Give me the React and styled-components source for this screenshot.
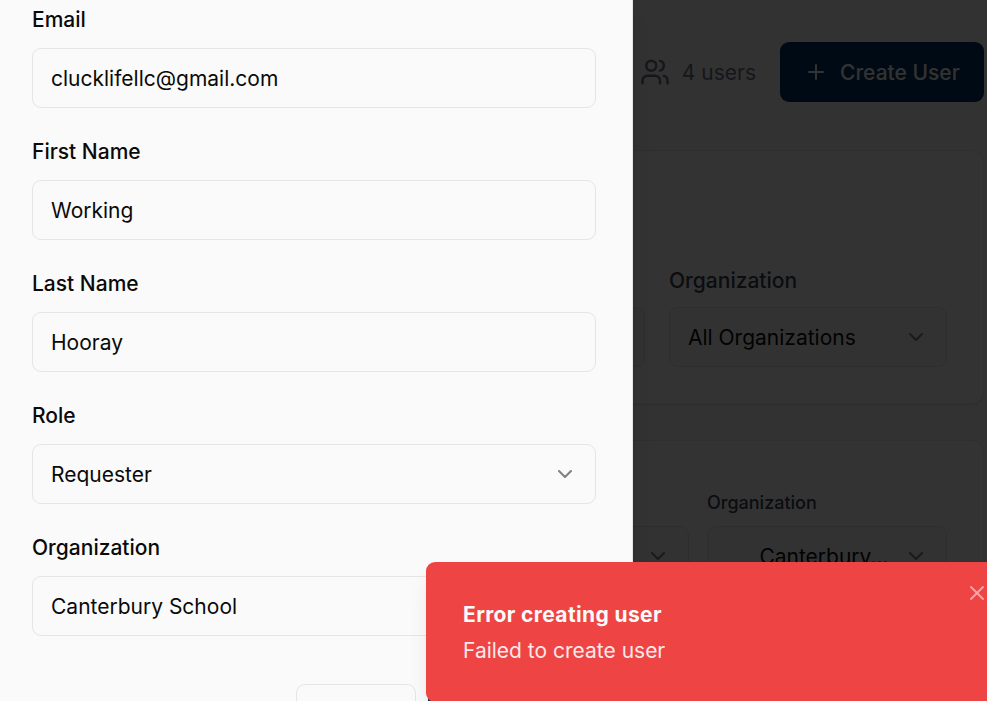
import React from "react";
import styled, { createGlobalStyle } from "styled-components";
import { ChevronDown, Plus, Users, X } from "lucide-react";

const GlobalStyle = createGlobalStyle`
  *, *::before, *::after { box-sizing: border-box; }
  body { margin: 0; overflow: hidden; background: #fafafa; }
  button, input { font: inherit; color: inherit; }
`;

const Screen = styled.div`
  position: relative;
  width: 987px;
  height: 701px;
  overflow: hidden;
  background: #fafafa;
  color: #0a0a0a;
  font-family: Inter, "Liberation Sans", sans-serif;
  font-size: 21px;
  line-height: 30px;
`;

/* Users page */
const Page = styled.main`
  width: 984px;
  padding-top: 42px;
`;

const PageHeader = styled.header`
  display: flex;
  justify-content: flex-end;
  align-items: center;
  gap: 24px;
  height: 60px;
`;

const UserCount = styled.div`
  display: flex;
  align-items: center;
  gap: 12px;
  color: #6b7280;
`;

const Text = styled.span`
  padding-top: 2px;
`;

const PrimaryButton = styled.button`
  display: flex;
  align-items: center;
  gap: 12px;
  width: 204px;
  height: 60px;
  padding: 0 24px;
  border: 0;
  border-radius: 9px;
  background: #003366;
  color: #fafafa;
  font-weight: 500;
  white-space: nowrap;

  svg { flex: none; }
`;

const Card = styled.section`
  display: flex;
  align-items: flex-start;
  justify-content: flex-end;
  gap: ${(p) => p.$gap}px;
  height: ${(p) => p.$height}px;
  margin-top: ${(p) => p.$top}px;
  padding: ${(p) => p.$padTop}px 36px 0;
  border: 1px solid #e9e9e9;
  border-radius: 12px;
  background: #ffffff;
  box-shadow: 0 1px 3px rgba(0, 0, 0, 0.1);
`;

const Filter = styled.div`
  display: flex;
  flex-direction: column;
  justify-content: flex-end;
  width: ${(p) => p.$width}px;
  height: ${(p) => p.$height}px;
`;

const FilterLabel = styled.span`
  margin-bottom: 11px;
  color: #374151;
  font-size: ${(p) => (p.$small ? 18 : 21)}px;
  line-height: ${(p) => (p.$small ? 24 : 30)}px;
  font-weight: 500;
`;

/* Form controls */
const Control = styled.div`
  display: flex;
  align-items: center;
  justify-content: space-between;
  width: 100%;
  height: 60px;
  flex: none;
  padding: 0 18px;
  border: 1px solid #e5e5e5;
  border-radius: 9px;
  background: #fafafa;

  svg { opacity: 0.5; }
`;

const CenteredValue = styled(Text)`
  flex: 1;
  padding-left: 18px;
  text-align: center;
`;

const Input = styled.input`
  display: block;
  width: 100%;
  height: 60px;
  padding: 0 18px;
  border: 1px solid #e5e5e5;
  border-radius: 9px;
  outline: 0;
  background: #fafafa;
`;

/* Layers above the page */
const Overlay = styled.div`
  position: absolute;
  inset: 0;
  background: rgba(0, 0, 0, 0.8);
`;

const Drawer = styled.aside`
  position: absolute;
  top: 0;
  left: 0;
  width: 633px;
  height: 701px;
  padding: 5px 36px 0 32px;
  border-right: 1px solid #e5e5e5;
  background: #fafafa;
  box-shadow: 0 15px 23px -5px rgba(0, 0, 0, 0.1), 0 6px 9px -6px rgba(0, 0, 0, 0.1);
`;

const Form = styled.form`
  display: flex;
  flex-direction: column;
  gap: 29px;
`;

const Field = styled.div`
  display: flex;
  flex-direction: column;
  gap: 13px;
`;

const Label = styled.label`
  font-weight: 500;
`;

const Actions = styled.div`
  display: flex;
  gap: 12px;
  margin: 19px -32px 0 264px;
`;

const ActionButton = styled.button`
  width: ${(p) => p.$width}px;
  height: 60px;
  flex: none;
  border: 1px solid ${(p) => (p.$primary ? "#003366" : "#e5e5e5")};
  border-radius: ${(p) => (p.$primary ? 0 : 9)}px;
  background: ${(p) => (p.$primary ? "#003366" : "#fafafa")};
`;

const Toast = styled.div`
  position: absolute;
  left: 426px;
  top: 562px;
  width: 600px;
  height: 140px;
  padding: 38px 37px 0;
  border-radius: 9px;
  background: #ef4444;
  color: #fafafa;
  box-shadow: 0 15px 23px -5px rgba(0, 0, 0, 0.1), 0 6px 9px -6px rgba(0, 0, 0, 0.1);
`;

const ToastTitle = styled.div`
  font-weight: 700;
  letter-spacing: 0.37px;
`;

const ToastText = styled.div`
  margin-top: 6px;
  opacity: 0.9;
`;

const ToastClose = styled.button`
  position: absolute;
  top: 19px;
  left: 539px;
  display: flex;
  padding: 0;
  border: 0;
  background: none;
  color: #fca5a5;
`;

const fields = [
  { id: "email", label: "Email", value: "clucklifellc@gmail.com" },
  { id: "first", label: "First Name", value: "Working" },
  { id: "last", label: "Last Name", value: "Hooray" },
  { id: "role", label: "Role", value: "Requester", select: true },
  { id: "org", label: "Organization", value: "Canterbury School", select: true },
];

export default function App() {
  return (
    <Screen>
      <GlobalStyle />
      <Page>
        <PageHeader>
          <UserCount>
            <Users size={30} />
            <Text>4 users</Text>
          </UserCount>
          <PrimaryButton>
            <Plus size={24} />
            <Text>Create User</Text>
          </PrimaryButton>
        </PageHeader>
        <Card $top={48} $height={254} $padTop={115} $gap={24}>
          <Filter $width={278} $height={101}>
            <Control />
          </Filter>
          <Filter $width={278} $height={101}>
            <FilterLabel>Organization</FilterLabel>
            <Control>
              <Text>All Organizations</Text>
              <ChevronDown size={24} />
            </Control>
          </Filter>
        </Card>
        <Card $top={36} $height={300} $padTop={49} $gap={18}>
          <Filter $width={240} $height={96}>
            <Control>
              <Text />
              <ChevronDown size={24} />
            </Control>
          </Filter>
          <Filter $width={240} $height={96}>
            <FilterLabel $small>Organization</FilterLabel>
            <Control>
              <CenteredValue>Canterbury...</CenteredValue>
              <ChevronDown size={24} />
            </Control>
          </Filter>
        </Card>
      </Page>
      <Overlay />
      <Drawer>
        <Form>
          {fields.map((f) => (
            <Field key={f.id}>
              <Label htmlFor={f.id}>{f.label}</Label>
              {f.select ? (
                <Control id={f.id}>
                  <Text>{f.value}</Text>
                  <ChevronDown size={24} />
                </Control>
              ) : (
                <Input id={f.id} defaultValue={f.value} />
              )}
            </Field>
          ))}
          <Actions>
            <ActionButton type="button" $width={120} />
            <ActionButton type="button" $width={168} $primary />
          </Actions>
        </Form>
      </Drawer>
      <Toast role="alert">
        <ToastTitle>Error creating user</ToastTitle>
        <ToastText>Failed to create user</ToastText>
        <ToastClose aria-label="Close">
          <X size={24} />
        </ToastClose>
      </Toast>
    </Screen>
  );
}
